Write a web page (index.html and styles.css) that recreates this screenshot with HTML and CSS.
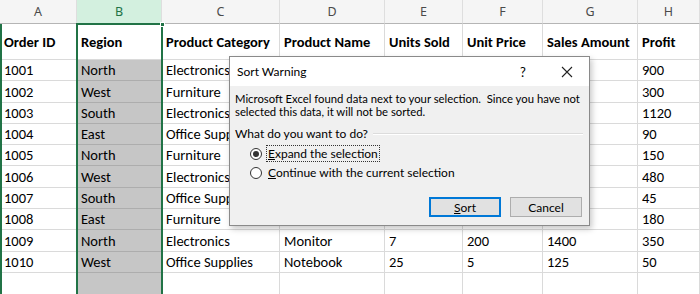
FILE: index.html
```html
<!DOCTYPE html>
<html lang="en">
<head>
  <meta charset="UTF-8">
  <title>Sort Warning</title>
  <link rel="stylesheet" href="styles.css">
</head>
<body>

  <div class="sheet">
    <!-- column letters -->
    <div class="col-head">A</div>
    <div class="col-head active">B</div>
    <div class="col-head">C</div>
    <div class="col-head">D</div>
    <div class="col-head">E</div>
    <div class="col-head">F</div>
    <div class="col-head">G</div>
    <div class="col-head">H</div>

    <!-- titles -->
    <div class="cell title">Order ID</div>
    <div class="cell title">Region</div>
    <div class="cell title">Product Category</div>
    <div class="cell title">Product Name</div>
    <div class="cell title">Units Sold</div>
    <div class="cell title">Unit Price</div>
    <div class="cell title">Sales Amount</div>
    <div class="cell title">Profit</div>

    <div class="cell">1001</div><div class="cell sel">North</div><div class="cell">Electronics</div><div class="cell"></div><div class="cell"></div><div class="cell"></div><div class="cell"></div><div class="cell">900</div>
    <div class="cell">1002</div><div class="cell sel">West</div><div class="cell">Furniture</div><div class="cell"></div><div class="cell"></div><div class="cell"></div><div class="cell"></div><div class="cell">300</div>
    <div class="cell">1003</div><div class="cell sel">South</div><div class="cell">Electronics</div><div class="cell"></div><div class="cell"></div><div class="cell"></div><div class="cell"></div><div class="cell">1120</div>
    <div class="cell">1004</div><div class="cell sel">East</div><div class="cell">Office Supplies</div><div class="cell"></div><div class="cell"></div><div class="cell"></div><div class="cell"></div><div class="cell">90</div>
    <div class="cell">1005</div><div class="cell sel">North</div><div class="cell">Furniture</div><div class="cell"></div><div class="cell"></div><div class="cell"></div><div class="cell"></div><div class="cell">150</div>
    <div class="cell">1006</div><div class="cell sel">West</div><div class="cell">Electronics</div><div class="cell"></div><div class="cell"></div><div class="cell"></div><div class="cell"></div><div class="cell">480</div>
    <div class="cell">1007</div><div class="cell sel">South</div><div class="cell">Office Supplies</div><div class="cell"></div><div class="cell"></div><div class="cell"></div><div class="cell"></div><div class="cell">45</div>
    <div class="cell">1008</div><div class="cell sel">East</div><div class="cell">Furniture</div><div class="cell"></div><div class="cell"></div><div class="cell"></div><div class="cell"></div><div class="cell">180</div>
    <div class="cell">1009</div><div class="cell sel">North</div><div class="cell">Electronics</div><div class="cell">Monitor</div><div class="cell">7</div><div class="cell">200</div><div class="cell">1400</div><div class="cell">350</div>
    <div class="cell">1010</div><div class="cell sel">West</div><div class="cell">Office Supplies</div><div class="cell">Notebook</div><div class="cell">25</div><div class="cell">5</div><div class="cell">125</div><div class="cell">50</div>
    <div class="cell"></div><div class="cell sel"></div><div class="cell"></div><div class="cell"></div><div class="cell"></div><div class="cell"></div><div class="cell"></div><div class="cell"></div>

    <!-- selection outlines -->
    <div class="edge-a"></div>
    <div class="sel-box"><span class="handle"></span></div>
  </div>

  <!-- Sort Warning dialog -->
  <div class="dialog">
    <div class="dlg-title">
      <span class="dlg-name">Sort Warning</span>
      <span class="dlg-help">?</span>
      <span class="dlg-close">
        <svg width="12" height="12" viewBox="0 0 12 12"><path d="M1 1 L11 11 M11 1 L1 11" stroke="#222" stroke-width="1.1" fill="none"/></svg>
      </span>
    </div>
    <div class="dlg-body">
      <p class="dlg-msg">Microsoft Excel found data next to your selection.&nbsp; Since you have not<br>selected this data, it will not be sorted.</p>
      <div class="group">
        <span>What do you want to do?</span>
        <span class="rule"></span>
      </div>
      <div class="option first">
        <span class="radio checked"></span>
        <span class="opt-label focus"><u>E</u>xpand the selection</span>
      </div>
      <div class="option">
        <span class="radio"></span>
        <span class="opt-label"><u>C</u>ontinue with the current selection</span>
      </div>
      <div class="dlg-buttons">
        <button class="btn default"><u>S</u>ort</button>
        <button class="btn">Cancel</button>
      </div>
    </div>
  </div>

</body>
</html>
```

FILE: styles.css
```css
* {
  box-sizing: border-box;
}

body {
  margin: 0;
  padding: 0;
  background-color: #fff;
  overflow: hidden;
}

.sheet {
  position: relative;
  display: grid;
  grid-template-columns: 77px 85px 118px 105px 78px 80px 95px 62px;
  grid-template-rows: 24px 36px repeat(10, 21.3px) 22px;
  font-family: Carlito, Lato, sans-serif;
  font-size: 14.5px;
  color: #000;
}

.col-head {
  background-color: #f5f5f5;
  border-right: 1px solid #dedede;
  border-bottom: 1px solid #b5b5b5;
  display: flex;
  align-items: center;
  justify-content: center;
  font-family: "Noto Sans", sans-serif;
  font-size: 12.5px;
  color: #4a4a4a;
}

.col-head.active {
  background-color: #d3f0df;
  color: #217346;
}

.cell {
  border-right: 1px solid #dadada;
  border-bottom: 1px solid #dadada;
  padding: 0 0 1px 4px;
  display: flex;
  align-items: flex-end;
  white-space: nowrap;
  overflow: hidden;
}

.cell.title {
  font-weight: bold;
  align-items: center;
  padding-bottom: 0;
}

.cell.sel {
  background-color: #c6c6c6;
  border-bottom-color: #adadad;
}

.edge-a {
  position: absolute;
  left: 0;
  top: 24px;
  bottom: 0;
  width: 2px;
  background-color: #217346;
}

.sel-box {
  position: absolute;
  left: 76px;
  top: 23px;
  width: 87px;
  bottom: -4px;
  border: 2px solid #217346;
}

.handle {
  position: absolute;
  right: -4px;
  top: -3px;
  width: 5px;
  height: 5px;
  background-color: #217346;
  border: 1px solid #fff;
}

/* dialog */
.dialog {
  position: absolute;
  left: 229px;
  top: 56px;
  width: 361px;
  height: 170px;
  border: 1px solid #8a8a8a;
  box-shadow: 2px 3px 6px rgba(0, 0, 0, 0.22);
  font-family: Lato, "Noto Sans", sans-serif;
  font-size: 12px;
  color: #000;
  display: flex;
  flex-direction: column;
}

.dlg-title {
  height: 29px;
  background-color: #fff;
  display: flex;
  align-items: center;
  padding-left: 7px;
}

.dlg-name {
  flex: 1;
  font-size: 12px;
}

.dlg-help {
  width: 44px;
  font-size: 13px;
  text-align: center;
}

.dlg-close {
  width: 44px;
  display: flex;
  justify-content: center;
  align-items: center;
}

.dlg-body {
  flex: 1;
  background-color: #f0f0f0;
  padding: 7px 6px 0 5px;
}

.dlg-msg {
  margin: 0;
  font-size: 11.3px;
  line-height: 12.5px;
  white-space: nowrap;
}

.group {
  display: flex;
  align-items: center;
  margin-top: 9px;
  height: 14px;
  line-height: 14px;
}

.rule {
  flex: 1;
  height: 2px;
  margin-left: 5px;
  border-top: 1px solid #dcdcdc;
  border-bottom: 1px solid #fff;
}

.option {
  display: flex;
  align-items: center;
  height: 19px;
  padding-left: 15px;
}

.option.first {
  margin-top: 3px;
}

.radio {
  width: 12px;
  height: 12px;
  border: 1px solid #333;
  border-radius: 50%;
  background-color: #fff;
  margin-right: 4px;
  position: relative;
}

.radio.checked::after {
  content: "";
  position: absolute;
  left: 2px;
  top: 2px;
  width: 6px;
  height: 6px;
  border-radius: 50%;
  background-color: #333;
}

.opt-label {
  padding: 0 1px;
  border: 1px solid transparent;
}

.opt-label.focus {
  border: 1px dotted #333;
}

.dlg-buttons {
  display: flex;
  justify-content: flex-end;
  gap: 9px;
  margin-top: 15px;
  padding-right: 1px;
}

.btn {
  width: 72px;
  height: 20px;
  padding: 0;
  border: 1px solid #adadad;
  background-color: #e1e1e1;
  font-family: Lato, "Noto Sans", sans-serif;
  font-size: 12px;
  color: #000;
}

.btn.default {
  border: 2px solid #0078d7;
}
```
